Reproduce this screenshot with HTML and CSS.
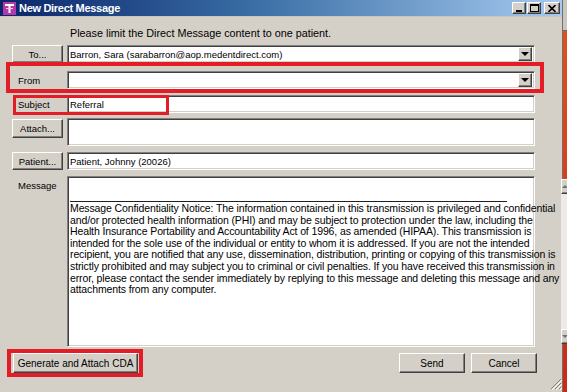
FILE: index.html
```html
<!DOCTYPE html>
<html lang="en">
<head>
    <meta charset="UTF-8">
    <title>New Direct Message</title>
    <link rel="stylesheet" href="styles.css">
</head>
<body>
    <div class="desktop">
        <!-- Dialog window -->
        <div class="window">
            <div class="titlebar">
                <svg class="app-icon" width="13" height="13" viewBox="0 0 13 13">
                    <rect x="0" y="0" width="13" height="13" fill="#b03aa8"/>
                    <rect x="2" y="2" width="9" height="2" fill="#ffffff"/>
                    <rect x="5.5" y="2" width="2" height="9" fill="#ffffff"/>
                    <rect x="3" y="6" width="7" height="1" fill="#f3c6ef"/>
                </svg>
                <span class="title">New Direct Message</span>
                <div class="controls">
                    <span class="ctl"><svg width="8" height="7" viewBox="0 0 8 7"><rect x="1" y="5" width="6" height="2" fill="#000"/></svg></span>
                    <span class="ctl"><svg width="9" height="8" viewBox="0 0 9 8"><rect x="0.5" y="0.5" width="8" height="7" fill="none" stroke="#000"/><rect x="0" y="0" width="9" height="2" fill="#000"/></svg></span>
                    <span class="ctl ctl-close"><svg width="8" height="7" viewBox="0 0 8 7"><path d="M0.5 0 L7.5 7 M7.5 0 L0.5 7" stroke="#000" stroke-width="1.6"/></svg></span>
                </div>
            </div>

            <div class="content">
                <p class="intro">Please limit the Direct Message content to one patient.</p>

                <div class="row row-to">
                    <div class="label-col"><button class="btn btn-side">To...</button></div>
                    <div class="field combo">
                        <span class="value">Barron, Sara (sarabarron@aop.medentdirect.com)</span>
                        <span class="drop"><span class="tri"></span></span>
                    </div>
                </div>

                <div class="row row-from">
                    <div class="label-col"><span class="label">From</span></div>
                    <div class="field combo">
                        <span class="value"></span>
                        <span class="drop"><span class="tri"></span></span>
                    </div>
                </div>

                <div class="row row-subject">
                    <div class="label-col"><span class="label">Subject</span></div>
                    <div class="field"><span class="value">Referral</span></div>
                </div>

                <div class="row row-attach">
                    <div class="label-col"><button class="btn btn-side btn-attach">Attach...</button></div>
                    <div class="field field-attach"></div>
                </div>

                <div class="row row-patient">
                    <div class="label-col"><button class="btn btn-side">Patient...</button></div>
                    <div class="field"><span class="value">Patient, Johnny (20026)</span></div>
                </div>

                <div class="row row-message">
                    <div class="label-col"><span class="label label-top">Message</span></div>
                    <div class="field field-message">
                        <div class="message-text">
                            <div class="reply-area"></div>
                            <hr class="sig-line">
                            <p class="notice">Message Confidentiality Notice: The information contained in this transmission is privileged and confidential<br>and/or protected health information (PHI) and may be subject to protection under the law, including the<br>Health Insurance Portability and Accountability Act of 1996, as amended (HIPAA). This transmission is<br>intended for the sole use of the individual or entity to whom it is addressed. If you are not the intended<br>recipient, you are notified that any use, dissemination, distribution, printing or copying of this transmission is<br>strictly prohibited and may subject you to criminal or civil penalties. If you have received this transmission in<br>error, please contact the sender immediately by replying to this message and deleting this message and any<br>attachments from any computer.</p>
                        </div>
                        <div class="scrollbar">
                            <span class="sb-btn"><span class="tri-up"></span></span>
                            <span class="sb-track"></span>
                            <span class="sb-btn"><span class="tri-down"></span></span>
                        </div>
                    </div>
                </div>

                <div class="footer">
                    <button class="btn btn-cda">Generate and Attach CDA</button>
                    <div class="footer-right">
                        <button class="btn btn-action">Send</button>
                        <button class="btn btn-action">Cancel</button>
                    </div>
                </div>
            </div>

            <svg class="grip" width="12" height="12" viewBox="0 0 12 12">
                <path d="M11 1 L1 11 M11 5 L5 11 M11 9 L9 11" stroke="#808080" stroke-width="1"/>
                <path d="M12 2 L2 12 M12 6 L6 12 M12 10 L10 12" stroke="#ffffff" stroke-width="1"/>
            </svg>

            <!-- Red annotation boxes -->
            <div class="mark mark-from"></div>
            <div class="mark mark-subject"></div>
            <div class="mark mark-cda"></div>
        </div>

        <div class="edge"></div>
    </div>
</body>
</html>
```

FILE: styles.css
```css
* {
    margin: 0;
    padding: 0;
    box-sizing: border-box;
}

body {
    font-family: "Liberation Sans", Arial, sans-serif;
    font-size: 11px;
    color: #000000;
    background-color: #d8471c;
    width: 567px;
    height: 392px;
    overflow: hidden;
}

.desktop {
    display: flex;
    width: 567px;
    height: 392px;
}

.window {
    position: relative;
    width: 562px;
    height: 392px;
    background-color: #d4d0c8;
    display: flex;
    flex-direction: column;
}

/* Title bar */
.titlebar {
    height: 17px;
    display: flex;
    align-items: center;
    padding-left: 3px;
    background: linear-gradient(to right, #0a246a 0%, #3a6ea5 45%, #a6caf0 100%);
    border-bottom: 1px solid #c9c6be;
}

.app-icon {
    flex: none;
}

.title {
    margin-left: 3px;
    color: #ffffff;
    font-weight: bold;
    font-size: 11px;
    letter-spacing: -0.3px;
}

.controls {
    margin-left: auto;
    margin-right: 2px;
    display: flex;
    gap: 1px;
}

.ctl {
    width: 14px;
    height: 12px;
    display: flex;
    align-items: center;
    justify-content: center;
    background-color: #d4d0c8;
    border: 1px solid;
    border-color: #ffffff #404040 #404040 #ffffff;
    box-shadow: inset -1px -1px 0 #808080;
}

.ctl-close {
    margin-left: 2px;
    width: 16px;
}

/* Dialog content */
.content {
    padding: 0 0 0 12px;
}

.intro {
    margin-top: 10px;
    margin-left: 58px;
    line-height: 13px;
    font-size: 10.8px;
}

.row {
    display: flex;
    gap: 4px;
    font-size: 9.5px;
}

.row-to { margin-top: 5px; }
.row-from { margin-top: 8px; }
.row-subject { margin-top: 6px; }
.row-attach { margin-top: 5px; }
.row-patient { margin-top: 6px; }
.row-message { margin-top: 6px; }

.label-col {
    width: 51px;
    flex: none;
    display: flex;
    align-items: center;
}

.row-message .label-col,
.row-attach .label-col {
    align-items: flex-start;
}

.label {
    padding-left: 6px;
}

.label-top {
    margin-top: 4px;
}

.field {
    width: 468px;
    height: 18px;
    background-color: #ffffff;
    border: 1px solid;
    border-color: #808080 #ffffff #ffffff #808080;
    box-shadow: inset 1px 1px 0 #404040, inset -1px -1px 0 #d4d0c8;
    display: flex;
    align-items: center;
    position: relative;
}

.value {
    padding-left: 2px;
    white-space: nowrap;
    flex: 1;
}

.field-attach {
    height: 28px;
}

.combo .drop {
    width: 14px;
    height: 14px;
    margin-right: 2px;
    display: flex;
    align-items: center;
    justify-content: center;
    background-color: #d4d0c8;
    border: 1px solid;
    border-color: #ffffff #404040 #404040 #ffffff;
    box-shadow: inset -1px -1px 0 #808080;
}

.tri {
    width: 0;
    height: 0;
    border-left: 4px solid transparent;
    border-right: 4px solid transparent;
    border-top: 4px solid #000000;
}

/* Message area */
.field-message {
    height: 171px;
    align-items: stretch;
}

.message-text {
    flex: 1;
    padding: 0 2px;
}

.reply-area {
    height: 24px;
}

.sig-line {
    border: none;
    border-top: 1px solid #202020;
    width: 437px;
    margin: 0;
}

.notice {
    margin-top: 1px;
    line-height: 11.6px;
    font-size: 10.5px;
    white-space: nowrap;
    letter-spacing: -0.12px;
}

.scrollbar {
    width: 15px;
    margin: 2px 2px 2px 0;
    display: flex;
    flex-direction: column;
    background-color: #ecebe6;
}

.sb-track {
    flex: 1;
}

.sb-btn {
    height: 15px;
    display: flex;
    align-items: center;
    justify-content: center;
    background-color: #d4d0c8;
    border: 1px solid;
    border-color: #ffffff #404040 #404040 #ffffff;
    box-shadow: inset -1px -1px 0 #808080;
}

.tri-up,
.tri-down {
    width: 0;
    height: 0;
    border-left: 3px solid transparent;
    border-right: 3px solid transparent;
}

.tri-up {
    border-bottom: 3px solid #707070;
}

.tri-down {
    border-top: 3px solid #707070;
}

/* Buttons */
.btn {
    font-family: "Liberation Sans", Arial, sans-serif;
    font-size: 9.5px;
    color: #000000;
    background-color: #d4d0c8;
    border: 1px solid;
    border-color: #ffffff #404040 #404040 #ffffff;
    box-shadow: inset -1px -1px 0 #808080;
    display: flex;
    align-items: center;
    justify-content: center;
    white-space: nowrap;
}

.btn-side {
    width: 51px;
    height: 18px;
}

.btn-attach {
    height: 19px;
    margin-top: 1px;
}

.footer {
    display: flex;
    align-items: flex-start;
    margin-top: 6px;
    padding-right: 25px;
}

.btn-cda {
    width: 125px;
    height: 20px;
    margin-left: 1px;
    font-size: 10px;
}

.footer-right {
    margin-left: auto;
    display: flex;
    gap: 6px;
}

.btn-action {
    width: 66px;
    height: 20px;
    font-size: 10px;
}

.grip {
    position: absolute;
    right: 0;
    bottom: 2px;
}

/* Red annotation boxes drawn over the dialog */
.mark {
    position: absolute;
    border: 4px solid #e21d25;
}

.mark-from {
    left: 6px;
    top: 62px;
    width: 538px;
    height: 31px;
}

.mark-subject {
    left: 13px;
    top: 95px;
    width: 156px;
    height: 20px;
    border-width: 3px;
}

.mark-cda {
    left: 7px;
    top: 349px;
    width: 136px;
    height: 28px;
}

/* Desktop strip on the right */
.edge {
    flex: 1;
    background: linear-gradient(to bottom, #c9c7c0 0, #c9c7c0 30px, #6b6b6b 30px, #6b6b6b 31px, #e0501e 31px, #c92a14 100%);
    border-left: 1px solid #707070;
}
```
